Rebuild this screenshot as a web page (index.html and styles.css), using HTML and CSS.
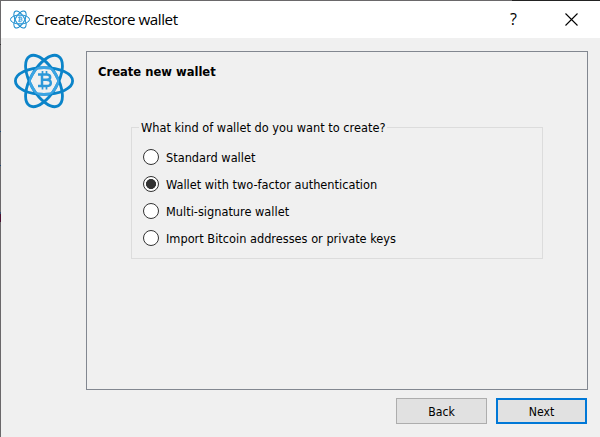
FILE: index.html
```html
<!DOCTYPE html>
<html lang="en">
<head>
<meta charset="utf-8">
<title>Create/Restore wallet</title>
<link rel="stylesheet" href="styles.css">
</head>
<body>
<svg class="defs" aria-hidden="true">
  <defs>
    <clipPath id="core"><circle cx="30" cy="28" r="15"/></clipPath>
    <g id="orbits">
      <ellipse cx="30" cy="28" rx="28.6" ry="13.4"/>
      <ellipse cx="30" cy="28" rx="28.6" ry="13.4" transform="rotate(60 30 28)"/>
      <ellipse cx="30" cy="28" rx="28.6" ry="13.4" transform="rotate(120 30 28)"/>
    </g>
  </defs>
  <symbol id="logo" viewBox="0 0 60 56">
    <use href="#orbits" fill="none" stroke="#0b84c9" stroke-width="2.8"/>
    <g clip-path="url(#core)"><use href="#orbits" fill="none" stroke="#3ba4e3" stroke-width="2.8"/></g>
    <path d="M24 21.5H32.5C37.4 21.5 37.4 26.8 32.5 26.8H28M32.5 26.8C38.2 26.8 38.2 33 32.5 33H24M28 21.5V33" fill="none" stroke="#2c98d9" stroke-width="2.5"/>
    <path d="M28.5 18V21.5M32.5 18V21.5M28.5 33V36.5M32.5 33V36.5" fill="none" stroke="#2c98d9" stroke-width="1.7"/>
  </symbol>
</svg>
<div class="window">
  <header class="titlebar">
    <svg class="app-icon"><use href="#logo"/></svg>
    <h1 class="title">Create/Restore wallet</h1>
    <span class="help">?</span>
    <svg class="close" viewBox="0 0 13 13"><path d="M.5 .5L12.5 12.5M12.5 .5L.5 12.5"/></svg>
  </header>
  <main class="content">
    <svg class="logo"><use href="#logo"/></svg>
    <section class="panel">
      <h2 class="heading">Create new wallet</h2>
      <fieldset class="group">
        <legend>What kind of wallet do you want to create?</legend>
        <label class="option"><span class="radio"></span><span class="text">Standard wallet</span></label>
        <label class="option"><span class="radio checked"></span><span class="text">Wallet with two-factor authentication</span></label>
        <label class="option"><span class="radio"></span><span class="text">Multi-signature wallet</span></label>
        <label class="option"><span class="radio"></span><span class="text">Import Bitcoin addresses or private keys</span></label>
      </fieldset>
    </section>
  </main>
  <footer class="actions">
    <button class="button">Back</button>
    <button class="button primary">Next</button>
  </footer>
</div>
</body>
</html>
```
FILE: styles.css
```css
* { box-sizing: border-box; }
body {
  margin: 0;
  font: 12.65px/16px "DejaVu Sans Condensed", "DejaVu Sans", sans-serif;
  color: #000;
}
.defs { position: absolute; width: 0; height: 0; }
.window {
  width: 600px;
  height: 437px;
  padding: 1px 0 0 1px;
  background:
    linear-gradient(90deg, #6a686a 0 512px, #222 512px) 0 0 / 100% 1px no-repeat,
    linear-gradient(#6a686a 0 44px, #333 44px 45px, #6a686a 45px 131px, #1c4a78 131px 132px, #6a686a 132px 165px, #1c4a78 165px 166px, #6a686a 166px 212px, #34506e 212px 214px, #4a1030 214px 222px, #6a686a 222px) 0 0 / 1px 100% no-repeat,
    #f0f0f0;
  overflow: hidden;
}
.titlebar {
  display: flex;
  align-items: center;
  height: 37px;
  padding: 0 22px 0 9px;
  background: #fff;
}
.app-icon { width: 20px; height: 19px; }
.title {
  flex: 1;
  margin: -1px 0 0 5px;
  font: 400 15.2px/22px "Open Sans", sans-serif;
  letter-spacing: -0.47px;
  white-space: nowrap;
}
.help { font: 16px/22px "Open Sans", sans-serif; margin: -1px 48px 0 0; }
.close { width: 13px; height: 13px; fill: none; stroke: #000; stroke-width: 1.1; }
.content { display: flex; padding: 13px 12px 0 13px; }
.logo { width: 60px; height: 56px; margin: 2px 12px 0 0; }
.panel {
  width: 502px;
  height: 339px;
  padding: 12px 44px 0 11px;
  border: 1px solid #828790;
}
.heading {
  margin: 0;
  font-size: 12.85px;
  line-height: 16px;
  font-weight: 700;
  white-space: nowrap;
}
.group {
  width: 412px;
  height: 140px;
  margin: 39px 0 0 33px;
  padding: 8px 0 0 11px;
  border: 1px solid #dcdcdc;
}
.group legend { height: 16px; margin-left: -4px; padding: 0 2px; line-height: 18px; white-space: nowrap; }
.option { display: flex; align-items: center; height: 27px; white-space: nowrap; }
.text { padding-top: 2px; }
.radio {
  width: 16px;
  height: 16px;
  margin-right: 7px;
  border: 1px solid #333;
  border-radius: 50%;
  background: #fff;
}
.checked { background: radial-gradient(circle, #333 0 4.7px, #fff 5.3px); }
.actions { display: flex; gap: 9px; justify-content: flex-end; padding: 8px 13px 0 0; }
.button {
  width: 91px;
  height: 26px;
  padding: 1px 0 0;
  border: 1px solid #adadad;
  background: #e1e1e1;
  font: inherit;
  font-size: 12.2px;
  color: inherit;
}
.primary { border: 2px solid #0078d7; }
```
